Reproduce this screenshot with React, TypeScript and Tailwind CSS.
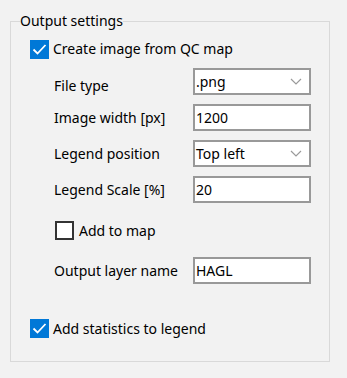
import React from 'react';

const CheckBox = ({ checked }: { checked: boolean }) => {
  if (checked) {
    return (
      <span className="w-[19px] h-[19px] bg-[#0078d7] flex items-center justify-center shrink-0">
        <svg width="19" height="19" viewBox="0 0 19 19">
          <path d="M3.5 9.5 L7.5 13.5 L15.5 5" fill="none" stroke="white" strokeWidth="1.8" />
        </svg>
      </span>
    );
  }
  return <span className="w-[19px] h-[19px] border-2 border-[#333333] bg-white shrink-0" />;
};

const Chevron = () => (
  <svg width="12" height="7" viewBox="0 0 12 7" className="mr-[7px]">
    <path d="M1 1 L6 6 L11 1" fill="none" stroke="#9a9a9a" strokeWidth="1.2" />
  </svg>
);

const Field = ({ value, dropdown }: { value: string; dropdown?: boolean }) => (
  <div className="w-[118px] h-[27px] border-2 border-[#999999] bg-white flex items-center justify-between pl-[1px]">
    <span>{value}</span>
    {dropdown && <Chevron />}
  </div>
);

const Row = ({ label, value, dropdown, labelClass }: { label: string; value: string; dropdown?: boolean; labelClass?: string }) => (
  <div className="flex items-center h-[27px] pl-[24px]">
    <span className={`w-[139px] ${labelClass ?? ''}`}>{label}</span>
    <Field value={value} dropdown={dropdown} />
  </div>
);

export default function App() {
  return (
    <div className="w-[347px] h-[378px] bg-[#f2f2f2] pt-[11px] pl-[10px] font-['Noto_Sans',sans-serif] text-[14px] text-black leading-[20px]">
      <fieldset className="w-[320px] h-[351px] border border-[#d9d9d9]">
        <legend className="ml-[9px] leading-[20px]">Output settings</legend>
        <div className="flex flex-col pl-[19px]">
          <label className="flex items-center gap-[4px] mt-[8px] h-[20px]">
            <CheckBox checked />
            <span>Create image from QC map</span>
          </label>

          <div className="flex flex-col gap-[9px] mt-[9px]">
            <Row label="File type" value=".png" dropdown labelClass="mt-[8px]" />
            <Row label="Image width [px]" value="1200" />
            <Row label="Legend position" value="Top left" dropdown />
            <Row label="Legend Scale [%]" value="20" />
          </div>

          <label className="flex items-center gap-[5px] mt-[18px] h-[19px] pl-[25px]">
            <CheckBox checked={false} />
            <span>Add to map</span>
          </label>

          <div className="mt-[17px]">
            <Row label="Output layer name" value="HAGL" />
          </div>

          <label className="flex items-center gap-[4px] mt-[35px] h-[19px]">
            <CheckBox checked />
            <span>Add statistics to legend</span>
          </label>
        </div>
      </fieldset>
    </div>
  );
}
